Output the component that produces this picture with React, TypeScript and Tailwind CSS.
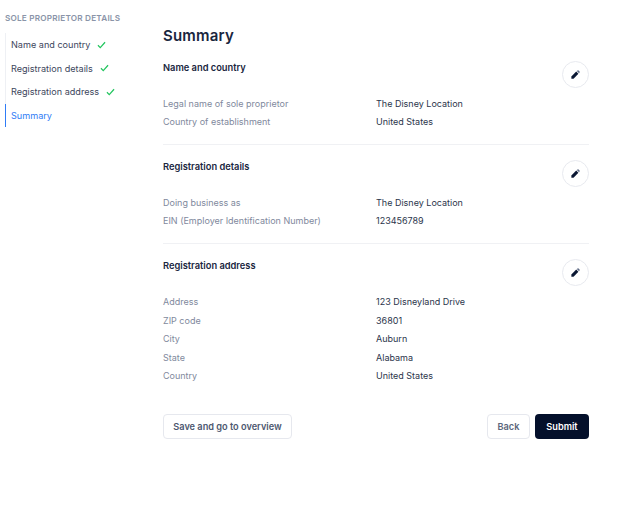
const nav = [
  { label: 'Name and country', done: true },
  { label: 'Registration details', done: true },
  { label: 'Registration address', done: true },
  { label: 'Summary', done: false },
];

const sections = [
  {
    title: 'Name and country',
    rows: [
      ['Legal name of sole proprietor', 'The Disney Location'],
      ['Country of establishment', 'United States'],
    ],
  },
  {
    title: 'Registration details',
    rows: [
      ['Doing business as', 'The Disney Location'],
      ['EIN (Employer Identification Number)', '123456789'],
    ],
  },
  {
    title: 'Registration address',
    rows: [
      ['Address', '123 Disneyland Drive'],
      ['ZIP code', '36801'],
      ['City', 'Auburn'],
      ['State', 'Alabama'],
      ['Country', 'United States'],
    ],
  },
];

const Check = () => (
  <svg width="9" height="8" viewBox="0 0 10 9" fill="none" className="ml-[7px]">
    <path d="M1 4.8 L3.6 7.4 L9 1.4" stroke="#22c55e" strokeWidth="1.4" />
  </svg>
);

const Pencil = () => (
  <svg width="9" height="9" viewBox="0 0 10 10">
    <path d="M0.4 7.2 L5.8 1.8 L8.2 4.2 L2.8 9.6 L0.4 9.6 Z" fill="#0a1733" />
    <path d="M6.5 1.1 L7.2 0.5 Q7.8 0.1 8.4 0.5 L9.5 1.6 Q9.9 2.2 9.5 2.8 L8.9 3.5 Z" fill="#5d6a85" />
  </svg>
);

const App = () => {
  return (
    <div className="flex h-[514px] w-[628px] bg-white font-['Inter',sans-serif] overflow-hidden">
      <aside className="w-[163px] shrink-0 pl-[5px] pt-[13px]">
        <h2 className="text-[8.2px] leading-[10px] font-semibold tracking-[0.2px] text-[#8a94a8]">SOLE PROPRIETOR DETAILS</h2>
        <ul className="mt-[10px] w-[130px] border-l border-[#eef0f4]">
          {nav.map((item) => (
            <li
              key={item.label}
              className={`flex h-[23.6px] items-center pl-[5px] text-[9.1px] ${
                item.done ? 'text-[#3c465c]' : '-ml-px border-l border-l-[#2f7cf6] text-[#2f7cf6]'
              }`}
            >
              {item.label}
              {item.done && <Check />}
            </li>
          ))}
        </ul>
      </aside>
      <main className="w-[426px] shrink-0 pt-[26px]">
        <h1 className="text-[15px] leading-[20px] font-semibold tracking-[0.2px] text-[#1a2640]">Summary</h1>
        {sections.map((section, i) => (
          <section key={section.title} className={i > 0 ? 'mt-[13px] border-t border-[#f0f1f4] pt-[15px]' : 'mt-[15px]'}>
            <div className="flex h-[27px] items-start justify-between">
              <h3 className="text-[9.3px] leading-[14px] font-semibold text-[#1a2640]">{section.title}</h3>
              <button className="flex h-[27px] w-[27px] items-center justify-center rounded-full border border-[#e8eaef] bg-white">
                <Pencil />
              </button>
            </div>
            <dl className="mt-[6px]">
              {section.rows.map(([k, v]) => (
                <div key={k} className="flex h-[18.6px] items-center text-[9px]">
                  <dt className="w-[213px] text-[#7f899d]">{k}</dt>
                  <dd className="text-[#2b354b]">{v}</dd>
                </div>
              ))}
            </dl>
          </section>
        ))}
        <div className="mt-[29px] flex items-center justify-between">
          <button className="h-[25px] w-[129px] rounded-[4px] border border-[#e6e8ee] bg-white text-[9.2px] font-semibold text-[#4d5870]">
            Save and go to overview
          </button>
          <div className="flex gap-[5px]">
            <button className="h-[25px] w-[43px] rounded-[4px] border border-[#e6e8ee] bg-white text-[9.2px] font-semibold text-[#5c667c]">
              Back
            </button>
            <button className="h-[25px] w-[54px] rounded-[4px] bg-[#04102b] text-[9.2px] font-semibold text-white">
              Submit
            </button>
          </div>
        </div>
      </main>
    </div>
  );
};

export default App;
